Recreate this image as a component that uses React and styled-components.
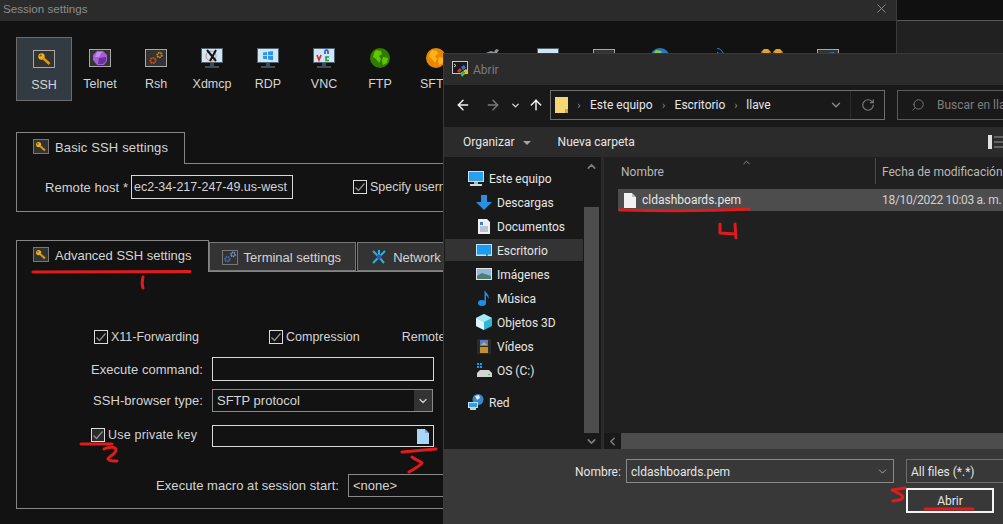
import React from "react";
import styled, { createGlobalStyle } from "styled-components";
import { ArrowLeft, ArrowRight, ArrowUp, ChevronDown, ChevronLeft, ChevronUp, RotateCw, Search, X } from "lucide-react";

const Global = createGlobalStyle`
  html, body { margin: 0; padding: 0; background: #121212; }
  * { box-sizing: border-box; }
`;

const Page = styled.div`
  position: relative;
  display: flex;
  width: 1003px;
  height: 524px;
  overflow: hidden;
  font-family: "Liberation Sans", Arial, sans-serif;
  font-size: 13px;
  color: #d4d4d4;
`;

/* session settings window */
const Session = styled.div`
  width: 897px;
  flex: none;
  background: #121212;
  border-right: 1px solid #3c3c3c;
`;

const TitleBar = styled.div`
  height: 21px;
  background: #2b2b2b;
  color: #8b8b8b;
  font-size: 11.6px;
  line-height: 17px;
  padding-left: 3px;
  display: flex;
  justify-content: space-between;
  align-items: flex-start;
  svg { margin: 1px 7px 0 0; color: #8c8c8c; }
`;

const SessionBody = styled.div`
  padding: 16px 16px 0;
`;

const Toolbar = styled.div`
  display: flex;
  height: 64px;
  margin-bottom: 31px;
`;

const Tool = styled.div`
  width: 56px;
  height: 64px;
  flex: none;
  display: flex;
  flex-direction: column;
  align-items: center;
  border: 1px solid ${(p) => (p.$active ? "#6a6a6a" : "transparent")};
  background: ${(p) => (p.$active ? "#323a42" : "transparent")};
  padding-top: ${(p) => (p.$active ? 11 : 10)}px;
`;

const ToolIcon = styled.div`
  height: 20px;
  display: flex;
  align-items: center;
  justify-content: center;
  margin-bottom: 9px;
`;

const ToolLabel = styled.div`
  line-height: 15px;
  font-size: 12.5px;
  white-space: nowrap;
`;

const Framed = styled.span`
  display: inline-flex;
  align-items: center;
  justify-content: center;
  width: ${(p) => (p.$small ? 16 : 22)}px;
  height: ${(p) => (p.$small ? 15 : 18)}px;
  flex: none;
  border: 1px solid ${(p) => (p.$small ? "#777" : "#a8a8a8")};
  background: #333;
`;

const Section = styled.section`
  margin-bottom: 28px;
`;

const Tabs = styled.div`
  display: flex;
  align-items: flex-end;
  height: 32px;
  position: relative;
  z-index: 1;
  margin-bottom: -1px;
`;

const ActiveTab = styled.div`
  height: 32px;
  display: flex;
  align-items: flex-start;
  gap: 6px;
  padding: 7px 16px 0 16px;
  background: #121212;
  border: 1px solid #858585;
  border-bottom: none;
  white-space: nowrap;
  line-height: 16px;
  letter-spacing: ${(p) => p.$spread || 0}px;
  > span { margin-top: -1px; }
`;

const Tab = styled.div`
  height: 29px;
  margin-bottom: 1px;
  display: flex;
  align-items: center;
  gap: 6px;
  padding: 1px 14px 0 12px;
  background: #333;
  border: 1px solid #777;
  white-space: nowrap;
  & + & {
    margin-left: 1px;
    padding-left: 13px;
  }
`;

const Panel = styled.div`
  border: 1px solid #858585;
  height: ${(p) => p.$h}px;
`;

const HostRow = styled.div`
  display: flex;
  align-items: center;
  padding: 11px 0 0 28px;
`;

const HostInput = styled.div`
  width: 162px;
  height: 24px;
  margin: 0 60px 0 3px;
  border: 1px solid #d8d8d8;
  padding-left: 2px;
  font-size: 12.5px;
  line-height: 22px;
  white-space: nowrap;
  overflow: hidden;
`;

const CheckItem = styled.label`
  display: inline-flex;
  align-items: center;
  gap: 3px;
  white-space: nowrap;
  margin-left: ${(p) => p.$left || 0}px;
  font-size: 12.5px;
`;

const Box = styled.span`
  width: 14px;
  height: 14px;
  flex: none;
  border: 1px solid #dcdcdc;
  display: inline-flex;
  align-items: center;
  justify-content: center;
  background: ${(p) => (p.$dim ? "#2a2a2a" : "transparent")};
`;

const CheckRow = styled.div`
  display: flex;
  height: 18px;
  padding-left: 77px;
  margin-bottom: 11px;
  margin-top: 56px;
`;

const FormRow = styled.div`
  display: grid;
  grid-template-columns: 186px 222px;
  column-gap: 9px;
  align-items: center;
  margin-bottom: ${(p) => p.$mb || 0}px;
`;

const FieldLabel = styled.div`
  text-align: right;
  font-size: 13px;
  letter-spacing: 0.05px;
  white-space: nowrap;
`;

const KeyLabel = styled.div`
  justify-self: start;
  margin-left: 74px;
  letter-spacing: 0.2px;
`;

const Field = styled.div`
  height: ${(p) => p.$h}px;
  border: 1px solid #d8d8d8;
  display: flex;
  justify-content: flex-end;
  align-items: center;
  padding-right: 4px;
`;

const SelectBox = styled.div`
  height: 23px;
  width: ${(p) => p.$w || 221}px;
  border: 1px solid #8a8a8a;
  display: flex;
  align-items: center;
  justify-content: space-between;
  padding-left: 4px;
  font-size: 13px;
`;

const SelectArrow = styled.div`
  width: 18px;
  height: 21px;
  background: #333;
  display: flex;
  align-items: center;
  justify-content: center;
`;

const MacroRow = styled.div`
  display: grid;
  grid-template-columns: 322px auto;
  column-gap: 9px;
  align-items: center;
  margin-top: 27px;
`;

const Backdrop = styled.div`
  flex: 1;
  background: #212121;
`;

const BackdropStrip = styled.div`
  height: 21px;
  background: #101010;
  border-bottom: 1px solid #595959;
`;

/* open file dialog */
const Dialog = styled.div`
  position: absolute;
  left: 443px;
  top: 53px;
  width: 600px;
  height: 471px;
  display: flex;
  flex-direction: column;
  background: #191919;
  border-left: 1px solid #3a3a3a;
  border-top: 1px solid #3a3a3a;
  font-family: Roboto, "Noto Sans", sans-serif;
  font-size: 12px;
  color: #e6e6e6;
  z-index: 2;
`;

const DialogTitle = styled.div`
  height: 31px;
  flex: none;
  background: #2b2b2b;
  display: flex;
  align-items: center;
  gap: 4px;
  padding: 1px 0 0 8px;
  color: #7c7c7c;
  svg { margin-top: -1px; }
`;

const NavBar = styled.div`
  height: 42px;
  flex: none;
  display: flex;
  align-items: flex-start;
  padding-top: 5px;
  background: #191919;
`;

const NavButtons = styled.div`
  width: 106px;
  height: 30px;
  flex: none;
  display: flex;
  align-items: center;
  padding-left: 11px;
  svg { flex: none; }
`;

const AddressBox = styled.div`
  width: 335px;
  height: 30px;
  flex: none;
  border: 1px solid #6e6e6e;
  display: flex;
  align-items: center;
  padding-left: 4px;
`;

const Crumbs = styled.div`
  flex: 1;
  display: flex;
  align-items: center;
  white-space: nowrap;
`;

const CrumbSep = styled.span`
  color: #8a8a8a;
  font-size: 11px;
  width: ${(p) => p.$w}px;
  text-align: center;
  flex: none;
`;

const AddressTail = styled.div`
  width: 34px;
  height: 100%;
  flex: none;
  border-left: 1px solid #2c2c2c;
  display: flex;
  align-items: center;
  justify-content: center;
`;

const SearchBox = styled.div`
  width: 200px;
  height: 30px;
  margin-left: 12px;
  border: 1px solid #5c5c5c;
  display: flex;
  align-items: center;
  padding-left: 13px;
  gap: 12px;
  color: #7e7e7e;
  white-space: nowrap;
`;

const ActionBar = styled.div`
  height: 30px;
  flex: none;
  background: #2b2b2b;
  display: flex;
  align-items: center;
  padding-left: 19px;
`;

const ActionCaret = styled.span`
  width: 0;
  height: 0;
  margin: 1px 27px 0 8px;
  border-left: 4px solid transparent;
  border-right: 4px solid transparent;
  border-top: 4px solid #a5a5a5;
`;

const ViewIcon = styled.span`
  margin-left: 353px;
  display: inline-flex;
`;

const Content = styled.div`
  height: 292px;
  flex: none;
  display: flex;
`;

const NavPane = styled.div`
  width: 157px;
  flex: none;
  display: flex;
  background: #191919;
`;

const NavList = styled.div`
  width: 139px;
  flex: none;
  padding: 10px 0 0 1px;
`;

const NavRow = styled.div`
  height: 22px;
  margin-bottom: ${(p) => p.$after || 2}px;
  display: flex;
  align-items: center;
  gap: 5px;
  padding-top: 2px;
  padding-left: ${(p) => (p.$top ? 23 : 31)}px;
  background: ${(p) => (p.$selected ? "#333" : "transparent")};
  white-space: nowrap;
`;

const NavGlyph = styled.span`
  width: 16px;
  flex: none;
  display: flex;
  justify-content: center;
  margin-top: -2px;
`;

const NavScroll = styled.div`
  width: 17px;
  flex: none;
  display: flex;
  flex-direction: column;
  align-items: center;
`;

const ScrollEnd = styled.div`
  height: ${(p) => p.$h}px;
  width: 100%;
  flex: none;
  display: flex;
  align-items: ${(p) => (p.$start ? "flex-start" : "center")};
  justify-content: center;
  padding-top: ${(p) => (p.$start ? 3 : 0)}px;
  color: #7d7d7d;
`;

const ScrollThumb = styled.div`
  flex: 1;
  width: 15px;
  background: #4d4d4d;
`;

const Splitter = styled.div`
  width: 3px;
  flex: none;
  background: #2b2b2b;
`;

const FilePane = styled.div`
  flex: 1;
  display: flex;
  flex-direction: column;
  background: #202020;
`;

const ColumnHeader = styled.div`
  position: relative;
  height: 32px;
  flex: none;
  display: grid;
  grid-template-columns: 271px 1fr;
  color: #b9b9b9;
`;

const SortCaret = styled.span`
  position: absolute;
  left: 137px;
  top: 0;
  color: #a0a0a0;
  display: flex;
`;

const HeaderCell = styled.div`
  height: 26px;
  margin-top: 1px;
  display: flex;
  align-items: center;
  padding-top: 2px;
  padding-left: ${(p) => p.$pad}px;
  border-left: ${(p) => (p.$line ? "1px solid #4a4a4a" : "none")};
  white-space: nowrap;
`;

const FileRows = styled.div`
  flex: 1;
`;

const FileRow = styled.div`
  height: 22px;
  margin-left: 14px;
  background: #4d4d4d;
  display: grid;
  grid-template-columns: 257px 1fr;
  align-items: center;
  white-space: nowrap;
`;

const FileName = styled.div`
  display: flex;
  align-items: center;
  gap: 6px;
  padding-left: 6px;
`;

const FileDate = styled.div`
  padding-left: 7px;
  color: #d0d0d0;
  letter-spacing: -0.3px;
`;

const HScroll = styled.div`
  height: 16px;
  flex: none;
  display: flex;
  background: #191919;
`;

const HArrow = styled.div`
  width: 17px;
  flex: none;
  display: flex;
  align-items: center;
  justify-content: center;
  color: #7d7d7d;
`;

const HThumb = styled.div`
  flex: 1;
  background: #4d4d4d;
`;

const Footer = styled.div`
  flex: 1;
  background: #383838;
  display: grid;
  grid-template-columns: 51px 268px 200px;
  grid-template-rows: 24px 25px;
  column-gap: 0;
  row-gap: 5px;
  padding: 10px 0 0 131px;
  align-items: center;
`;

const FooterLabel = styled.span`
  padding-top: 2px;
`;

const FooterInput = styled.div`
  height: 24px;
  border: 1px solid #8a8a8a;
  display: flex;
  align-items: center;
  justify-content: space-between;
  padding: 2px 4px 0;
  svg { margin-top: -2px; }
`;

const FilterBox = styled(FooterInput)`
  margin-left: 12px;
  border-color: #6e6e6e;
  padding-top: 1px;
`;

const OpenButton = styled.div`
  grid-column: 3;
  width: 88px;
  height: 25px;
  margin-left: 12px;
  border: 2px solid #f4f4f4;
  display: flex;
  align-items: center;
  justify-content: center;
`;

/* red marker scribbles on top of the screenshot */
const Marks = styled.svg`
  position: absolute;
  left: 0;
  top: 0;
  z-index: 5;
  pointer-events: none;
`;

const Key = ({ s = 1 }) => (
  <svg width={14 * s} height={14 * s} viewBox="0 0 14 14">
    <circle cx="4.5" cy="4.5" r="3.2" fill="#f2b01e" />
    <path d="M6 6l6.5 6" stroke="#d99a12" strokeWidth="2.6" />
    <circle cx="3.6" cy="3.6" r="1" fill="#6b5208" />
  </svg>
);

const Gem = () => (
  <svg width="14" height="14" viewBox="0 0 14 14">
    <path d="M4 0h6l4 4v6l-3 4H4L0 9V4z" fill="#a35fd6" />
    <path d="M4 1h5l-3 5-4 0z" fill="#c78af0" />
    <path d="M6 7l7-1v4l-3 3H5z" fill="#6d2f9e" />
  </svg>
);

const Gears = ({ small }) => (
  <svg width="16" height="14" viewBox="0 0 16 14">
    <circle cx="5" cy="9.5" r="2.6" fill="none" stroke={small ? "#3f6fc4" : "#d9480f"} strokeWidth="2" strokeDasharray="1.6 .7" />
    <circle cx="11.5" cy="4" r="2.3" fill="none" stroke={small ? "#7c9bd6" : "#d98a12"} strokeWidth="1.8" strokeDasharray="1.5 .6" />
  </svg>
);

const Monitor = ({ children }) => (
  <svg width="22" height="20" viewBox="0 0 22 20">
    <rect x="0" y="0" width="22" height="15" fill="#51636e" />
    <rect x="1" y="1" width="20" height="13" fill="#cfe6f7" />
    <rect x="9" y="15" width="4" height="3" fill="#3f4c55" />
    <rect x="4" y="18" width="14" height="2" fill="#3f4c55" />
    {children}
  </svg>
);

const XGlyph = () => (
  <Monitor>
    <circle cx="10" cy="8" r="5" fill="none" stroke="#d98a70" />
    <path d="M6 2l9 11M15 2L9 13" stroke="#111" strokeWidth="2" />
  </Monitor>
);

const WinGlyph = () => (
  <Monitor>
    <path d="M6 4.5l4-.6v3.3H6zM11 3.7l5-.8v4.3h-5zM6 8h4v3.3l-4-.6zM11 8h5v4.2l-5-.8z" fill="#2d95e8" />
  </Monitor>
);

const VncGlyph = () => (
  <Monitor>
    <path d="M4 7l2 5 2-5" fill="none" stroke="#e02222" strokeWidth="1.6" />
    <path d="M12 6V3.5a1.5 1.5 0 013 0V6" fill="none" stroke="#2a4fe0" strokeWidth="1.6" />
    <path d="M16 9h-3v3.5h3" fill="none" stroke="#1f9d2f" strokeWidth="1.6" />
  </Monitor>
);

const Globe = ({ sea, land }) => (
  <svg width="20" height="20" viewBox="0 0 20 20">
    <circle cx="10" cy="10" r="10" fill={sea} />
    <path d="M6 2l5 1 1 3-3 2 2 3-2 4-3-4-3-2 1-4zM13 9l5 1-1 5-4 2-1-4z" fill={land} />
  </svg>
);

const Plug = () => (
  <svg width="20" height="20" viewBox="0 0 20 20">
    <path d="M1 6l8-3 3 1 2-3 3 1-2 3 1 3-6 6-6-1z" fill="#8b949b" />
    <rect x="1" y="6" width="4" height="2" fill="#d9a21b" />
  </svg>
);

const FramedWindows = () => (
  <Framed>
    <svg width="14" height="12" viewBox="0 0 14 12">
      <path d="M1 2l5-1v4H1zM7 1l6-1v5H7zM1 6h5v4l-5-1zM7 6h6v6l-6-1z" fill="#2d88d8" />
    </svg>
  </Framed>
);

const tools = [
  { label: "SSH", icon: <Framed><Key /></Framed>, active: true },
  { label: "Telnet", icon: <Framed><Gem /></Framed> },
  { label: "Rsh", icon: <Framed><Gears /></Framed> },
  { label: "Xdmcp", icon: <XGlyph /> },
  { label: "RDP", icon: <WinGlyph /> },
  { label: "VNC", icon: <VncGlyph /> },
  { label: "FTP", icon: <Globe sea="#2f7d00" land="#63c400" /> },
  { label: "SFTP", icon: <Globe sea="#e88800" land="#ffb31a" /> },
  { label: "Serial", icon: <Plug /> },
  { label: "File", icon: <Monitor><circle cx="11" cy="10" r="5" fill="#3f8fc4" /><path d="M8 8l4-2 2 3-3 3z" fill="#b7c93a" /></Monitor> },
  { label: "Shell", icon: <Framed><svg width="14" height="12" viewBox="0 0 14 12"><path d="M1 1l4 3-4 3" fill="none" stroke="#bbb" /></svg></Framed> },
  { label: "Browser", icon: <Globe sea="#2778c8" land="#8fc93a" /> },
  { label: "Mosh", icon: <svg width="20" height="20" viewBox="0 0 20 20"><path d="M0 10a4 3 0 018 0z" fill="#3d86c6" /><path d="M11 0a9 9 0 017 9M11 4a5 5 0 013 5" fill="none" stroke="#3d86c6" /></svg> },
  { label: "Aws S3", icon: <svg width="22" height="20" viewBox="0 0 22 20"><path d="M0 4l3-3h4l3 3v8H0zM12 4l3-3h4l3 3v8H12z" fill="#e2a12c" /><path d="M0 4l5 3 5-3M12 4l5 3 5-3" fill="none" stroke="#8a5d10" /></svg> },
  { label: "WSL", icon: <FramedWindows /> },
];

const Tick = () => (
  <svg width="12" height="12" viewBox="0 0 12 12">
    <path d="M1.5 6.5l3 3 6-7" fill="none" stroke="#8f8f8f" strokeWidth="1.3" />
  </svg>
);

const Checked = ({ children, left, dim }) => (
  <CheckItem $left={left}>
    <Box $dim={dim}><Tick /></Box>
    {children}
  </CheckItem>
);

const NetworkStar = () => (
  <svg width="16" height="16" viewBox="0 0 16 16">
    <path d="M8 8L2 2M8 8l6-6M8 8l-6 6M8 8l5 6M8 8V1" stroke="#25b5d8" strokeWidth="2" />
    <circle cx="8" cy="8" r="2.4" fill="#3a4fc0" />
  </svg>
);

const PageIcon = ({ color = "#f2f2f2", w = 12, h = 15 }) => (
  <svg width={w} height={h} viewBox="0 0 12 15">
    <path d="M0 0h8l4 4v11H0z" fill={color} />
    <path d="M8 0v4h4z" fill="#00000033" />
  </svg>
);

const MobaIcon = () => (
  <svg width="17" height="17" viewBox="0 0 17 17">
    <rect x=".5" y=".5" width="15" height="12" fill="#1a1a1a" stroke="#c8c8c8" />
    <path d="M2 3l2 1.5L2 6" fill="none" stroke="#ccc" />
    <path d="M5 10l3-3 2 2-3 3z" fill="#e03030" />
    <path d="M9 6l3-2 2 3-3 2z" fill="#3070e0" />
    <path d="M11 10l3-2 2 2-2 3z" fill="#e0c020" />
    <path d="M8 12l3-2 2 3-3 3z" fill="#40c040" />
  </svg>
);

const FolderIcon = () => (
  <svg width="13" height="16" viewBox="0 0 13 16">
    <path d="M0 0h13v16H0z" fill="#f4d774" />
    <path d="M10 12h3v4h-3z" fill="#c9a848" />
  </svg>
);

const PcIcon = () => (
  <svg width="16" height="15" viewBox="0 0 16 15" style={{ marginTop: -2 }}>
    <rect width="16" height="11" fill="#bfe3f7" />
    <rect x="1" y="1" width="14" height="9" fill="#2aa0ec" />
    <rect x="6" y="11" width="4" height="2" fill="#b5b5b5" />
    <rect x="2" y="13" width="12" height="2" fill="#d8d8d8" />
  </svg>
);

const DownIcon = () => (
  <svg width="16" height="15" viewBox="0 0 16 15">
    <path d="M5 0h6v7h5l-8 8-8-8h5z" fill="#2a8fe0" />
  </svg>
);

const DocIcon = () => (
  <svg width="16" height="15" viewBox="0 0 16 15">
    <path d="M2 0h9l3 3v12H2z" fill="#f0f0f0" />
    <path d="M4 3h3v3H4z" fill="#3a7fd0" />
    <path d="M4 8h8M4 10h8M4 12h8" stroke="#7a9ac0" />
  </svg>
);

const DesktopIcon = () => (
  <svg width="16" height="12" viewBox="0 0 16 12">
    <rect width="16" height="12" fill="#bfe3f7" />
    <rect x="1" y="1" width="14" height="9.5" fill="#1c9cf0" />
    <rect x="10" y="10.5" width="2" height="1" fill="#333" />
  </svg>
);

const PictureIcon = () => (
  <svg width="16" height="12" viewBox="0 0 16 12">
    <rect width="16" height="12" fill="#e4e4e4" />
    <rect x="1" y="1" width="14" height="10" fill="#8fb8d8" />
    <path d="M1 8l5-3 9 3v3H1z" fill="#4f7f72" />
  </svg>
);

const NoteIcon = () => (
  <svg width="16" height="16" viewBox="0 0 16 16">
    <ellipse cx="6" cy="13" rx="4" ry="3" fill="#1c8fe8" />
    <path d="M8.5 13V0c1 3 5 4 4 9-1-3-2-3-2.5-3.500V13z" fill="#1c8fe8" />
  </svg>
);

const CubeIcon = () => (
  <svg width="16" height="16" viewBox="0 0 16 16">
    <path d="M8 0l8 4v8l-8 4-8-4V4z" fill="#2fb6d8" />
    <path d="M8 0l8 4-8 4-8-4z" fill="#a8e6f2" />
    <path d="M0 4l8 4v8l-8-4z" fill="#e0f5fa" />
  </svg>
);

const FilmIcon = () => (
  <svg width="14" height="15" viewBox="0 0 14 15">
    <rect width="14" height="15" fill="#2a2a2a" />
    <rect x="3" y="1" width="8" height="6" fill="#5a7ad0" />
    <rect x="3" y="8" width="8" height="6" fill="#c09030" />
    <path d="M4 6l3-3 3 3" fill="#d0b040" />
  </svg>
);

const DriveIcon = () => (
  <svg width="15" height="14" viewBox="0 0 15 14">
    <path d="M0 0h2v2H0zM3 0h2v2H3zM0 3h2v2H0zM3 3h2v2H3z" fill="#1c9cf0" />
    <path d="M3 7h9l3 3v4H0v-4z" fill="#d4d4d4" />
    <rect x="11" y="11" width="2" height="1" fill="#30d050" />
  </svg>
);

const NetIcon = () => (
  <svg width="16" height="16" viewBox="0 0 16 16" style={{ marginTop: -2 }}>
    <circle cx="10" cy="5.500" r="5.500" fill="#3b86c9" />
    <path d="M7 2l4-1 1 3-3 2z" fill="#dfeaf2" />
    <rect x="0" y="8" width="10" height="6" fill="#bfe3f7" />
    <rect x="1" y="9" width="8" height="4" fill="#2aa0ec" />
    <rect x="2" y="14" width="6" height="2" fill="#cfcfcf" />
  </svg>
);

const navItems = [
  { label: "Descargas", icon: <DownIcon /> },
  { label: "Documentos", icon: <DocIcon /> },
  { label: "Escritorio", icon: <DesktopIcon />, selected: true },
  { label: "Imágenes", icon: <PictureIcon /> },
  { label: "Música", icon: <NoteIcon /> },
  { label: "Objetos 3D", icon: <CubeIcon /> },
  { label: "Vídeos", icon: <FilmIcon /> },
  { label: "OS (C:)", icon: <DriveIcon />, after: 10 },
];

const App = () => (
  <Page>
    <Global />
    <Session>
      <TitleBar>
        Session settings
        <X size={15} strokeWidth={1.5} />
      </TitleBar>
      <SessionBody>
        <Toolbar>
          {tools.map((t) => (
            <Tool key={t.label} $active={t.active}>
              <ToolIcon>{t.icon}</ToolIcon>
              <ToolLabel>{t.label}</ToolLabel>
            </Tool>
          ))}
        </Toolbar>

        <Section>
          <Tabs>
            <ActiveTab $spread={0.14}>
              <Framed $small><Key s={0.8} /></Framed>
              Basic SSH settings
            </ActiveTab>
          </Tabs>
          <Panel $h={49}>
            <HostRow>
              <FieldLabel>Remote host *</FieldLabel>
              <HostInput>ec2-34-217-247-49.us-west</HostInput>
              <Checked>Specify username</Checked>
            </HostRow>
          </Panel>
        </Section>

        <Section>
          <Tabs>
            <ActiveTab>
              <Framed $small><Key s={0.8} /></Framed>
              Advanced SSH settings
            </ActiveTab>
            <Tab>
              <Framed $small><Gears small /></Framed>
              Terminal settings
            </Tab>
            <Tab>
              <NetworkStar />
              Network settings
            </Tab>
          </Tabs>
          <Panel $h={238}>
            <CheckRow>
              <Checked>X11-Forwarding</Checked>
              <Checked left={70}>Compression</Checked>
              <CheckItem $left={42}>Remote environment:</CheckItem>
            </CheckRow>
            <FormRow $mb={8}>
              <FieldLabel>Execute command:</FieldLabel>
              <Field $h={24} />
            </FormRow>
            <FormRow $mb={13}>
              <FieldLabel>SSH-browser type:</FieldLabel>
              <SelectBox>
                SFTP protocol
                <SelectArrow><ChevronDown size={12} strokeWidth={2.5} color="#cfcfcf" /></SelectArrow>
              </SelectBox>
            </FormRow>
            <FormRow>
              <KeyLabel>
                <Checked dim>Use private key</Checked>
              </KeyLabel>
              <Field $h={22}>
                <PageIcon color="#a9d6f7" />
              </Field>
            </FormRow>
            <MacroRow>
              <FieldLabel>Execute macro at session start:</FieldLabel>
              <SelectBox $w={180}>&lt;none&gt;</SelectBox>
            </MacroRow>
          </Panel>
        </Section>
      </SessionBody>
    </Session>

    <Backdrop>
      <BackdropStrip />
    </Backdrop>

    <Dialog>
      <DialogTitle>
        <MobaIcon />
        Abrir
      </DialogTitle>
      <NavBar>
        <NavButtons>
          <ArrowLeft size={16} strokeWidth={2.2} color="#f2f2f2" />
          <ArrowRight size={16} strokeWidth={2.2} color="#7a7a7a" style={{ marginLeft: 14 }} />
          <ChevronDown size={11} strokeWidth={3} color="#d8d8d8" style={{ marginLeft: 9 }} />
          <ArrowUp size={16} strokeWidth={2.2} color="#f2f2f2" style={{ marginLeft: 7 }} />
        </NavButtons>
        <AddressBox>
          <FolderIcon />
          <Crumbs>
            <CrumbSep $w={22}>›</CrumbSep>
            Este equipo
            <CrumbSep $w={22}>›</CrumbSep>
            Escritorio
            <CrumbSep $w={21}>›</CrumbSep>
            llave
          </Crumbs>
          <ChevronDown size={14} strokeWidth={2.4} color="#8a8a8a" style={{ marginRight: 7 }} />
          <AddressTail>
            <RotateCw size={14} strokeWidth={2} color="#7c7c7c" />
          </AddressTail>
        </AddressBox>
        <SearchBox>
          <Search size={14} strokeWidth={1.5} color="#7e7e7e" style={{ transform: "scaleX(-1)" }} />
          Buscar en llave
        </SearchBox>
      </NavBar>
      <ActionBar>
        Organizar
        <ActionCaret />
        Nueva carpeta
        <ViewIcon>
          <svg width="16" height="14" viewBox="0 0 16 14">
            <rect x="0" y="0" width="4" height="14" fill="#e0e0e0" />
            <path d="M6 2h10M6 7h10M6 12h10" stroke="#9a9a9a" />
          </svg>
        </ViewIcon>
      </ActionBar>
      <Content>
        <NavPane>
          <NavList>
            <NavRow $top>
              <PcIcon />
              Este equipo
            </NavRow>
            {navItems.map((n) => (
              <NavRow key={n.label} $selected={n.selected} $after={n.after}>
                <NavGlyph>{n.icon}</NavGlyph>
                {n.label}
              </NavRow>
            ))}
            <NavRow $top>
              <NetIcon />
              Red
            </NavRow>
          </NavList>
          <NavScroll>
            <ScrollEnd $h={50} $start>
              <ChevronUp size={13} strokeWidth={3} />
            </ScrollEnd>
            <ScrollThumb />
            <ScrollEnd $h={16}>
              <ChevronDown size={13} strokeWidth={3} />
            </ScrollEnd>
          </NavScroll>
        </NavPane>
        <Splitter />
        <FilePane>
          <ColumnHeader>
            <SortCaret><ChevronUp size={11} strokeWidth={1.8} /></SortCaret>
            <HeaderCell $pad={17}>Nombre</HeaderCell>
            <HeaderCell $pad={6} $line>Fecha de modificación</HeaderCell>
          </ColumnHeader>
          <FileRows>
            <FileRow>
              <FileName>
                <PageIcon />
                cldashboards.pem
              </FileName>
              <FileDate>18/10/2022 10:03 a. m.</FileDate>
            </FileRow>
          </FileRows>
          <HScroll>
            <HArrow><ChevronLeft size={13} strokeWidth={3} /></HArrow>
            <HThumb />
          </HScroll>
        </FilePane>
      </Content>
      <Footer>
        <FooterLabel>Nombre:</FooterLabel>
        <FooterInput>
          cldashboards.pem
          <ChevronDown size={13} strokeWidth={1.8} color="#a5a5a5" />
        </FooterInput>
        <FilterBox>All files (*.*)</FilterBox>
        <OpenButton>Abrir</OpenButton>
      </Footer>
    </Dialog>

    <Marks width="1003" height="524" viewBox="0 0 1003 524" fill="none" stroke="#e01b1b" strokeWidth="3" strokeLinecap="round" strokeLinejoin="round">
      <path d="M33 272L190 271.500" />
      <path d="M143 277C142 281 142 285 143 288" />
      <path d="M81 444L112 444" />
      <path d="M104 449C110 446 116 447 116 450C116 454 108 457 108 459C110 462 114 461 117 461" />
      <path d="M402 452L436 449" />
      <path d="M412 457C416 460 420 461 422 463C420 466 414 469 409 472" />
      <path d="M620 210C660 211 710 211 749 209" />
      <path d="M720 224L720 233L735 234M735 224L736 238" />
      <path d="M905 488L892 490L900 494C905 497 904 500 893 501" />
      <path d="M925 509L973 509" />
    </Marks>
  </Page>
);

export default App;
